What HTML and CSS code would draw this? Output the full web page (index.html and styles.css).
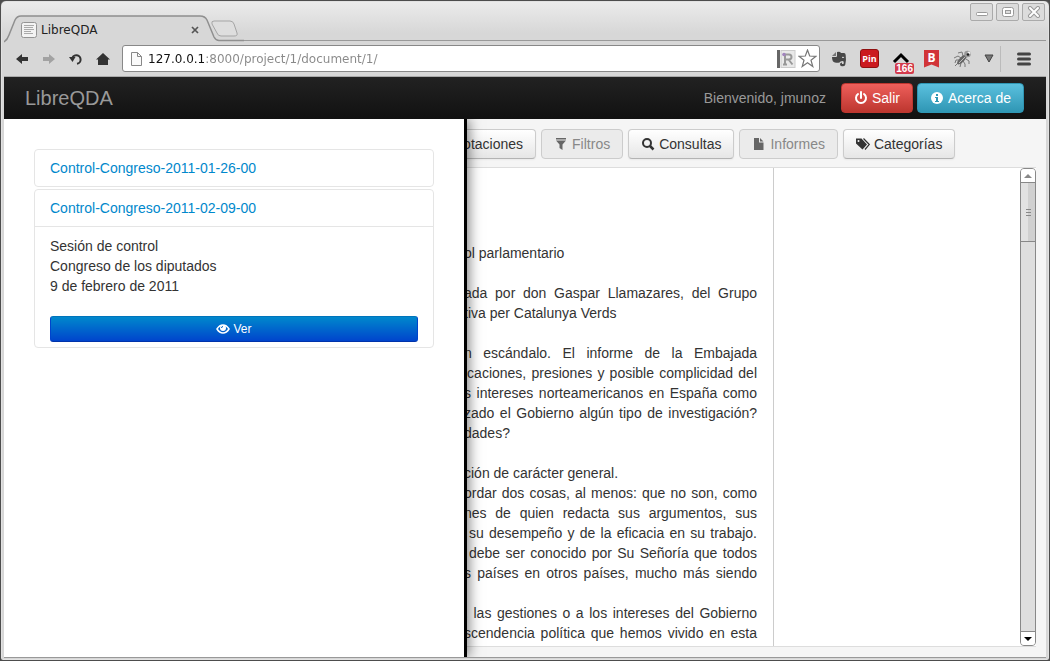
FILE: index.html
```html
<!DOCTYPE html>
<html lang="es">
<head>
<meta charset="utf-8">
<title>LibreQDA</title>
<link rel="stylesheet" href="styles.css">
</head>
<body>
<div class="window">
  <header class="titlebar">
    <div class="tab">
      <svg class="tab-shape" width="240" height="28" viewBox="0 0 240 28" aria-hidden="true">
        <path d="M0 27C3 25 4 23 5 20L11 5Q13 1 17 1H196Q201 1 203 5L210 22Q212 25 215 25H240V28H0Z" fill="#d7d7d7"/>
        <path d="M0 27C3 25 4 23 5 20L11 5Q13 1 17 1H196Q201 1 203 5L210 22Q212 25.500 215 25.500H240" fill="none" stroke="#8f8f8f" stroke-width="1.5"/>
        <path d="M210 6H226Q229 6 230 9L233 18Q234 21 230 21H217Q214 21 213 18L208 9Q207 6 210 6Z" fill="#dedede" stroke="#a5a5a5"/>
      </svg>
      <svg class="favicon" width="16" height="16" viewBox="0 0 16 16" aria-hidden="true"><rect x=".5" y=".5" width="15" height="15" rx="2" fill="#f3f3f3" stroke="#949494"/><path d="M3 3.500h10M3 5.500h9M3 7.500h10M3 9.500h7M3 11.500h9" stroke="#aaa"/></svg>
      <span class="tab-title">LibreQDA</span>
      <button class="tab-close" aria-label="Cerrar pestaña"><svg width="8" height="8" viewBox="0 0 8 8"><path d="M1 1l6 6M7 1L1 7" stroke="#555" stroke-width="1.700"/></svg></button>
    </div>
    <div class="window-buttons">
      <button aria-label="Minimizar"><svg width="14" height="12" viewBox="0 0 14 12"><rect x="1.500" y="6.500" width="11" height="3" rx="1" fill="#fff" stroke="#999"/></svg></button>
      <button aria-label="Maximizar"><svg width="14" height="12" viewBox="0 0 14 12"><rect x="1.500" y="1.500" width="11" height="9" rx="2" fill="#fff" stroke="#999"/><rect x="4.500" y="4.500" width="5" height="3" fill="#ddd" stroke="#999"/></svg></button>
      <button aria-label="Cerrar"><svg width="14" height="12" viewBox="0 0 14 12"><path d="M3 2l8 8M11 2l-8 8" stroke="#999" stroke-width="4" stroke-linecap="round"/><path d="M3 2l8 8M11 2l-8 8" stroke="#fff" stroke-width="2" stroke-linecap="round"/></svg></button>
    </div>
  </header>

  <div class="toolbar">
    <button class="nav-button" aria-label="Atrás"><svg width="14" height="14" viewBox="0 0 14 14"><path d="M1 7l6-5v3h6v4H7v3z" fill="#333"/></svg></button>
    <button class="nav-button" aria-label="Adelante"><svg width="14" height="14" viewBox="0 0 14 14"><path d="M13 7L7 2v3H1v4h6v3z" fill="#a2a2a2"/></svg></button>
    <button class="nav-button" aria-label="Recargar"><svg width="14" height="14" viewBox="0 0 14 14"><path d="M3 7.500a4.300 4.300 0 1 1 5 4.300" fill="none" stroke="#333" stroke-width="2"/><path d="M0 5l6.500 0-3 5z" fill="#333"/></svg></button>
    <button class="nav-button" aria-label="Inicio"><svg width="14" height="14" viewBox="0 0 14 14"><path d="M7 1l7 6.500h-2V13H2V7.500H0z" fill="#333"/></svg></button>
    <div class="address">
      <svg width="13" height="16" viewBox="0 0 13 16" aria-hidden="true"><path d="M1.500 1.500h6l4 4v9h-10z" fill="#fafafa" stroke="#888"/><path d="M7.500 1.500v4h4" fill="none" stroke="#888"/></svg>
      <input class="url" type="text" aria-label="Dirección" value="127.0.0.1:8000/project/1/document/1/">
      <button aria-label="Lector"><svg width="19" height="18" viewBox="0 0 19 18"><rect width="3" height="18" fill="#666"/><rect x="4" y=".5" width="14" height="17" fill="#e9e9e9" stroke="#ccc"/><path d="M8 14.500V5M8 4.500h4a2.500 2.500 0 0 1 0 5H8M11.500 9.500l4 5M6 14.500h4" fill="none" stroke="#999" stroke-width="2"/><circle cx="7" cy="4.500" r="1.800" fill="#a184bd"/></svg></button>
      <button aria-label="Añadir a favoritos"><svg width="19" height="19" viewBox="0 0 19 19"><path d="M9.500 1l2.200 6 6.300.3-5 3.900 1.800 6.300-5.300-3.700-5.300 3.700 1.800-6.300-5-3.900 6.300-.3z" fill="#fff" stroke="#777" stroke-width="1.200"/></svg></button>
    </div>
    <button class="extension" aria-label="Evernote"><svg width="16" height="16" viewBox="0 0 16 16"><path d="M5 1v4H1z" fill="#777"/><path d="M6 1q3-1 4 1h3q1.500 0 1.700 2 .8 5-.5 10-.7 1.500-3.500 1.200-2-.2-1.700-2.200.2-1.500 2-1.500v1.500h1.500q.8-3-1-3-2.500 0-3 1.500Q6 12 4 11.500 1 11 1 6h4q1 0 1-1z" fill="#484848"/><path d="M11 6.500q1.500-1 2 .5" fill="none" stroke="#ddd"/></svg></button>
    <button class="extension" aria-label="Pin it"><span class="pin">Pin</span></button>
    <button class="extension" aria-label="Mensajes, 166"><svg width="18" height="14" viewBox="0 0 18 14"><path d="M2 10l7-7 7 7" fill="none" stroke="#000" stroke-width="3"/></svg><span class="badge">166</span></button>
    <button class="extension" aria-label="Marcador"><span class="bookmark">B</span></button>
    <button class="extension" aria-label="Depurador"><svg width="20" height="20" viewBox="0 0 20 20"><path d="M10 7L9 3 5 4M8 9L5 7 1 9M7 11L3 11 2 14M13 10l3 2 0 3M10 12l2 3v3M8 14l-1 4M5 14l-3 3" fill="none" stroke="#777"/><ellipse cx="9" cy="10.500" rx="2.500" ry="6.500" transform="rotate(45 9 10.500)" fill="#666"/><path d="M6 14l6-6" stroke="#bbb"/><circle cx="14.500" cy="5" r="3.300" fill="#999"/><circle cx="16" cy="4" r="1.500" fill="#eee"/><circle cx="15" cy="5.500" r="1.300" fill="#222"/></svg></button>
    <button class="more" aria-label="Más extensiones"><svg width="10" height="9" viewBox="0 0 10 9"><path d="M1 1h8L5 8z" fill="#777" stroke="#444"/></svg></button>
    <button class="menu" aria-label="Menú"><svg width="14" height="14" viewBox="0 0 14 14"><path d="M1.500 2h11M1.500 7h11M1.500 12h11" stroke="#444" stroke-width="3" stroke-linecap="round"/></svg></button>
  </div>

  <nav class="navbar">
    <a class="brand" href="#">LibreQDA</a>
    <span class="welcome">Bienvenido, jmunoz</span>
    <button class="btn btn-danger"><svg width="14" height="14" viewBox="0 0 14 14" aria-hidden="true"><path d="M4 3a5 5 0 1 0 6 0M7 1v6" fill="none" stroke="#fff" stroke-width="2" stroke-linecap="round"/></svg>Salir</button>
    <button class="btn btn-info"><svg width="14" height="14" viewBox="0 0 14 14" aria-hidden="true"><circle cx="7" cy="7" r="6" fill="#fff"/><path d="M6 3h2v2H6zM5 6h3v4h1v1H5v-1h1V7H5z" fill="#2f96b4"/></svg>Acerca de</button>
  </nav>

  <main class="page">
    <div class="actions">
      <button class="btn"><svg width="14" height="14" viewBox="0 0 14 14" aria-hidden="true"><path d="M1 1h12v9H7l-4 3v-3H1z" fill="#333"/></svg>Anotaciones</button>
      <button class="btn" disabled><svg width="14" height="14" viewBox="0 0 14 14" aria-hidden="true"><path d="M2 1h10v1.500H2zM2 3.500h10L8.500 7.500V13l-3-2V7.500z" fill="#666"/></svg>Filtros</button>
      <button class="btn"><svg width="14" height="14" viewBox="0 0 14 14" aria-hidden="true"><circle cx="6" cy="6" r="4" fill="none" stroke="#333" stroke-width="2"/><path d="M9 9l3.500 3.500" stroke="#333" stroke-width="2.500"/></svg>Consultas</button>
      <button class="btn" disabled><svg width="14" height="14" viewBox="0 0 14 14" aria-hidden="true"><path d="M2 1h5v4.500h4.500V13H2zM8 1l3.500 3.500H8z" fill="#666"/></svg>Informes</button>
      <button class="btn"><svg width="14" height="14" viewBox="0 0 14 14" aria-hidden="true"><path d="M0 1.500h5.500L11 7.500l-4.500 5L0 6.500zM2.500 3a1 1 0 1 0 0 2 1 1 0 1 0 0-2" fill="#333" fill-rule="evenodd"/><path d="M7.500 1.500L13.300 7.500 9 12.500" fill="none" stroke="#333" stroke-width="1.200"/></svg>Categorías</button>
    </div>
    <div class="well">
      <article class="document">
        <p>ol parlamentario</p>
        <p><span>ada por don Gaspar Llamazares, del Grupo</span>tiva per Catalunya Verds</p>
        <p><span>n escándalo. El informe de la Embajada</span><span>icaciones, presiones y posible complicidad del</span><span>s intereses norteamericanos en España como</span><span>zado el Gobierno algún tipo de investigación?</span>dades?</p>
        <p>ción de carácter general.<span>ordar dos cosas, al menos: que no son, como</span><span>nes de quien redacta sus argumentos, sus</span><span class="whole-word">su desempeño y de la eficacia en su trabajo.</span><span class="whole-word">debe ser conocido por Su Señoría que todos</span><span>s países en otros países, mucho más siendo</span></p>
        <p><span>. las gestiones o a los intereses del Gobierno</span><span>scendencia política que hemos vivido en esta</span></p>
      </article>
      <aside class="notes"></aside>
      <div class="scrollbar">
        <button class="arrow" aria-label="Subir"><svg width="8" height="4" viewBox="0 0 8 4"><path d="M0 4l4-4 4 4z" fill="#888"/></svg></button>
        <div class="thumb"><i></i><i></i><i></i></div>
        <div class="track"></div>
        <button class="arrow" aria-label="Bajar"><svg width="8" height="4" viewBox="0 0 8 4"><path d="M0 0l4 4 4-4z" fill="#000"/></svg></button>
      </div>
    </div>
    <aside class="drawer">
      <section class="group"><h2><a href="#">Control-Congreso-2011-01-26-00</a></h2></section>
      <section class="group">
        <h2><a href="#">Control-Congreso-2011-02-09-00</a></h2>
        <div class="group-body">
          <p>Sesión de control<br>Congreso de los diputados<br>9 de febrero de 2011</p>
          <button class="view"><svg width="14" height="12" viewBox="0 0 14 12" aria-hidden="true"><path d="M1 6Q3.500 2 7 2t6 4q-2.500 4-6 4T1 6z" fill="none" stroke="#fff" stroke-width="1.500"/><circle cx="7" cy="5" r="3" fill="#fff"/><path d="M5.500 5Q5.500 3.500 7 3.500" fill="none" stroke="#06c"/></svg>Ver</button>
        </div>
      </section>
    </aside>
  </main>
</div>
</body>
</html>
```
FILE: styles.css
```css
* { box-sizing: border-box; }

:root { --drawer: 463px; }

body {
  margin: 0;
  background: #4d4d4d;
  color: #333;
  font: 14px/20px "Liberation Sans", Arial, sans-serif;
}

button {
  margin: 0;
  padding: 0;
  border: 0;
  background: none;
  color: inherit;
  font: inherit;
}

svg { display: block; flex: none; }
p, h2 { margin: 0; }
a { text-decoration: none; }

.window {
  display: flex;
  flex-direction: column;
  height: 100vh;
  border: 1px solid #4d4d4d;
  border-radius: 6px 6px 3px 3px;
  background: linear-gradient(#ececec, #d7d7d7 32px);
  padding: 0 3px 2px;
  box-shadow: inset 0 0 0 1px #e2e2e2;
  overflow: hidden;
}

/* Browser frame */
.titlebar {
  display: flex;
  align-items: flex-end;
  height: 40px;
  font: 12px/16px "DejaVu Sans", sans-serif;
  color: #222;
}
.tab {
  position: relative;
  display: flex;
  align-items: center;
  width: 240px;
  height: 26px;
  padding: 3px 45px 0 17px;
}
.tab-shape { position: absolute; left: 0; top: 0; }
.favicon, .tab-title, .tab-close { position: relative; }
.tab-title { flex: 1; margin-left: 4px; }
.window-buttons {
  display: flex;
  align-items: flex-start;
  align-self: stretch;
  justify-content: flex-end;
  flex: 1;
  gap: 3px;
  padding: 2px 1px 0 0;
  border-bottom: 1px solid #999;
}
.window-buttons button {
  display: grid;
  place-items: center;
  width: 23px;
  height: 18px;
  border: 1px solid #aaa;
  border-radius: 2px;
  background: #dcdcdc;
}

.toolbar {
  display: flex;
  align-items: center;
  height: 36px;
  padding-left: 4px;
  border-bottom: 1px solid #aaa;
  background: #d7d7d7;
}
.nav-button, .extension, .more, .menu {
  display: grid;
  place-items: center;
  flex: none;
  height: 26px;
}
.nav-button { width: 27px; }
.extension { position: relative; width: 31px; }
.more { width: 22px; }
.menu { width: 46px; border-left: 1px solid #bbb; }
.address {
  display: flex;
  align-items: center;
  gap: 2px;
  flex: 1;
  height: 27px;
  margin: 0 3px 0 6px;
  padding: 0 2px 0 7px;
  border: 1px solid #888;
  border-radius: 3px;
  background: #fff;
}
.url {
  flex: 1;
  min-width: 0;
  height: 24px;
  margin-left: 3px;
  padding: 0;
  border: 0;
  font: 12px/24px "DejaVu Sans", sans-serif;
  color: transparent;
  background: linear-gradient(90deg, #111 57px, #888 57px);
  background-clip: text;
  -webkit-background-clip: text;
}
.pin {
  width: 19px;
  height: 19px;
  border: 1px solid #8f1010;
  border-radius: 3px;
  background: #cb1a1f;
  color: #fff;
  font: bold 9px/17px "Open Sans", sans-serif;
  text-align: center;
}
.badge {
  position: absolute;
  right: 2px;
  bottom: -2px;
  padding: 0 1px;
  border-radius: 2px;
  background: #d33a4c;
  color: #fff;
  font: bold 10px/11px "Liberation Sans", sans-serif;
}
.bookmark {
  width: 15px;
  height: 18px;
  background: #d13438;
  clip-path: polygon(0 0, 100% 0, 100% 100%, 50% 84%, 0 100%);
  color: #fff;
  font: bold 12px/15px "Open Sans", sans-serif;
  text-align: center;
}

/* Application */
.navbar {
  display: flex;
  align-items: center;
  gap: 4px;
  flex: none;
  height: 42px;
  padding: 0 22px 0 21px;
  background: linear-gradient(#222, #111);
  color: #999;
}
.brand { flex: 1; color: #999; font-size: 20px; }
.welcome { margin-right: 11px; }

.btn {
  display: flex;
  align-items: center;
  gap: 4px;
  flex: none;
  height: 30px;
  padding: 0 12px;
  border: 1px solid #ccc;
  border-bottom-color: #b3b3b3;
  border-radius: 4px;
  background: linear-gradient(#fff, #e6e6e6);
  box-shadow: 0 1px 2px rgba(0, 0, 0, .05);
}
.btn:disabled { background: #ebebeb; border-color: #ccc; color: #888; box-shadow: none; }
.btn-danger { border-color: #bd362f; background: linear-gradient(#ee5f5b, #bd362f); color: #fff; }
.btn-info { border-color: #2f96b4; background: linear-gradient(#5bc0de, #2f96b4); color: #fff; }

.page {
  position: relative;
  display: flex;
  flex-direction: column;
  flex: 1;
  min-height: 0;
  padding: 10px 10px 10px 0;
  background: #f5f5f5;
  border-bottom: 1px solid #999;
  overflow: hidden;
}
.actions { display: flex; gap: 5px; padding-left: 411px; }
.well {
  display: grid;
  grid-template-columns: 310fr 246fr 16px;
  grid-template-rows: 100%;
  flex: 1;
  min-height: 0;
  margin-top: 8px;
  padding-left: 460px;
  border: 1px solid #ddd;
  border-width: 1px 0;
  background: #fff;
}
.document {
  min-width: 0;
  padding: 75px 16px 0 0;
  border-right: 1px solid #ccc;
  overflow: hidden;
}
.document p { margin-bottom: 20px; white-space: nowrap; }
.document span { display: block; text-align-last: justify; white-space: normal; }
.document .whole-word { padding-left: 5px; }

.scrollbar {
  display: flex;
  flex-direction: column;
  border: 1px solid #888;
  border-radius: 4px;
  background: #dedede;
  overflow: hidden;
}
.arrow { display: grid; place-items: center; flex: none; height: 13px; background: #fff; }
.thumb {
  display: flex;
  flex-direction: column;
  align-items: center;
  justify-content: center;
  gap: 2px;
  flex: none;
  height: 60px;
  border: 1px solid #888;
  border-width: 1px 0;
  background: linear-gradient(90deg, #e2e2e2 50%, #d0d0d0 50%);
}
.thumb i { width: 5px; height: 1px; background: #888; }
.track { flex: 1; border-bottom: 1px solid #888; }

.drawer {
  position: absolute;
  top: 0;
  bottom: 0;
  left: 0;
  width: var(--drawer);
  padding: 30px 30px 0;
  border-right: 3px solid #000;
  background: #fff;
  box-shadow: 2px 0 12px rgba(0, 0, 0, .5);
}
.group { margin-bottom: 2px; border: 1px solid #e5e5e5; border-radius: 4px; }
.group h2 { padding: 8px 15px; font: inherit; }
.group a { color: #08c; }
.group-body { padding: 9px 15px 5px; border-top: 1px solid #e5e5e5; }
.view {
  display: flex;
  align-items: center;
  justify-content: center;
  gap: 3px;
  width: 100%;
  height: 26px;
  margin-top: 20px;
  border: 1px solid #04c;
  border-color: #0074bb #04c #03a;
  border-radius: 3px;
  background: linear-gradient(#08c, #04c);
  color: #fff;
  font-size: 12px;
}
```
